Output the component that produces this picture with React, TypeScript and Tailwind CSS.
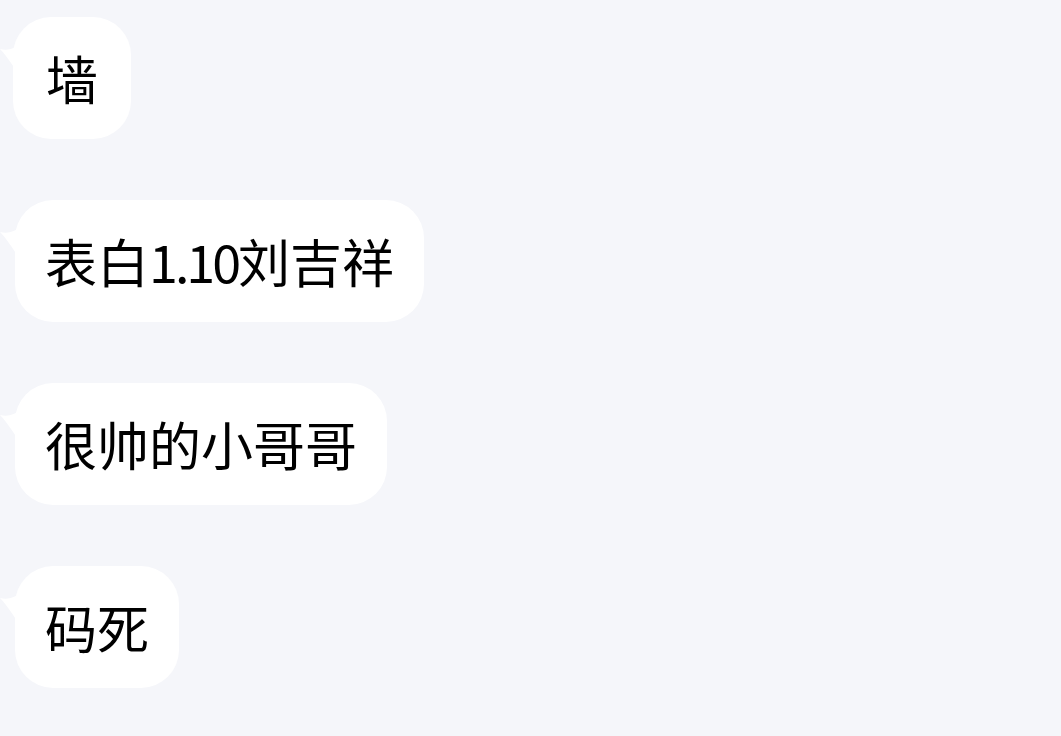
import React from 'react';

const messages: React.ReactNode[] = [
  '墙',
  <>
    表白<span className="tracking-[-3px]">1.10</span>刘吉祥
  </>,
  '很帅的小哥哥',
  '码死',
];

const Bubble: React.FC<{ children: React.ReactNode; first?: boolean }> = ({ children, first }) => (
  <div className="relative flex">
    {/* tail */}
    <svg
      className="absolute left-0 top-[26px]"
      width="22"
      height="40"
      viewBox="0 0 22 40"
    >
      <path d="M0 6 C8 8 14 6 22 0 L22 36 C16 28 8 14 0 6 Z" fill="#ffffff" />
    </svg>
    <div
      className={
        'relative flex h-[122px] items-center rounded-[38px] bg-white px-[30px] text-[52px] leading-none text-black ' +
        (first ? 'ml-[13px] min-w-[118px] justify-center' : 'ml-[15px]')
      }
    >
      {children}
    </div>
  </div>
);

export default function App() {
  return (
    <div
      className="flex h-[736px] w-[1061px] flex-col gap-[61px] overflow-hidden bg-[#f5f6fa] pt-[17px]"
      style={{ fontFamily: '"Noto Sans CJK SC", "Noto Sans", sans-serif' }}
    >
      {messages.map((m, i) => (
        <Bubble key={i} first={i === 0}>
          {m}
        </Bubble>
      ))}
    </div>
  );
}
